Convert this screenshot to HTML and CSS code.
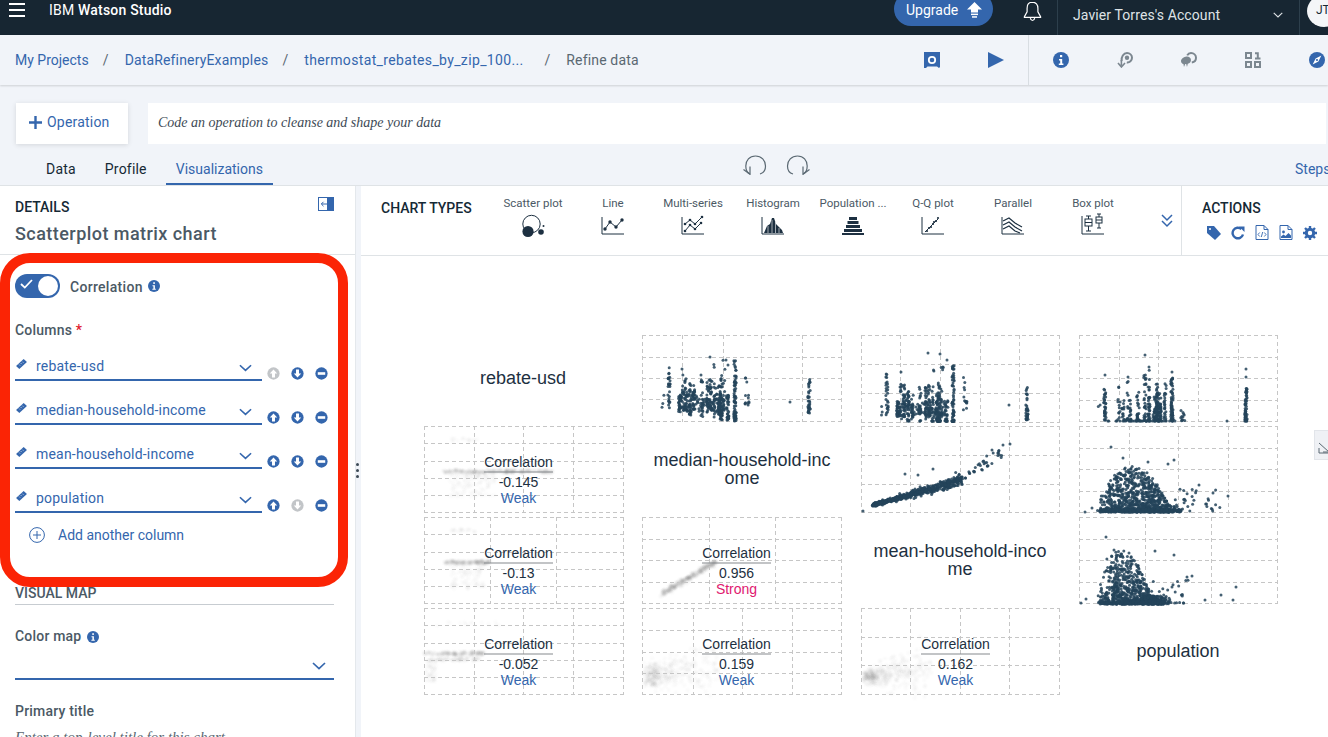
FILE: index.html
```html
<!DOCTYPE html>
<html lang="en">
<head>
<meta charset="UTF-8">
<meta name="viewport" content="width=device-width, initial-scale=1.0">
<title>Refine data - IBM Watson Studio</title>
<link rel="stylesheet" href="styles.css">
</head>
<body>
  <svg class="defs" width="0" height="0">
    <symbol id="i-info" viewBox="0 0 16 16"><circle cx="8" cy="8" r="8" fill="currentColor"/><rect x="7" y="3" width="2.2" height="2.2" fill="#fff"/><path d="M6 7h3.2v4.6H10.4V13H5.8v-1.4h1.4V8.4H6z" fill="#fff"/></symbol>
    <symbol id="i-chev" viewBox="0 0 14 8"><path d="M1 1l6 5.6L13 1" fill="none" stroke="currentColor" stroke-width="1.7"/></symbol>
    <symbol id="i-ruler" viewBox="0 0 12 11"><path d="M0 7.6L8.4 0 12 3.4 3.6 11z" fill="currentColor"/><path d="M3.4 6.2l1 1M5.2 4.6l1 1M7 3l1 1" stroke="#fff" stroke-width=".8"/></symbol>
    <symbol id="i-up" viewBox="0 0 14 14"><circle cx="7" cy="7" r="6.6" fill="currentColor"/><path d="M7 2.6L11 7H8.6v4.4H5.4V7H3z" fill="#fff"/></symbol>
    <symbol id="i-down" viewBox="0 0 14 14"><circle cx="7" cy="7" r="6.6" fill="currentColor"/><path d="M7 11.4L11 7H8.6V2.6H5.4V7H3z" fill="#fff"/></symbol>
    <symbol id="i-minus" viewBox="0 0 14 14"><circle cx="7" cy="7" r="6.6" fill="currentColor"/><rect x="3" y="5.6" width="8" height="2.8" fill="#fff"/></symbol>
  </svg>

  <header class="topbar">
    <div class="burger"><span></span><span></span><span></span></div>
    <div class="brand">IBM <b>Watson Studio</b></div>
    <div class="upgrade">Upgrade
      <svg width="15" height="16" viewBox="0 0 15 16"><path d="M7.5 0L15 7.4H11V10.5H4V7.4H0z" fill="#fff"/><rect x="4" y="11.6" width="7" height="1.5" fill="#fff"/><rect x="5" y="14.2" width="5" height="1.5" fill="#fff"/></svg>
    </div>
    <svg class="bell" width="19" height="21" viewBox="0 0 19 21"><path d="M9.5 1.2c-3.4 0-5.4 2.6-5.4 6v3.6L1.4 15.6v.8h16.2v-.8l-2.700-4.800V7.200c0-3.400-2-6-5.400-6zM7.300 17.200c.3 1.500 1.100 2.300 2.200 2.300s1.900-.8 2.200-2.300" fill="none" stroke="#fff" stroke-width="1.200"/></svg>
    <div class="account">
      <span>Javier Torres's Account</span>
      <svg class="account-chev" width="10" height="6" viewBox="0 0 14 8"><path d="M1 1l6 5.600L13 1" fill="none" stroke="#dfe3e6" stroke-width="1.600"/></svg>
    </div>
    <div class="avatar">JT</div>
  </header>

  <nav class="crumbbar">
    <div class="crumbs">
      <a>My Projects</a><i>/</i>
      <a>DataRefineryExamples</a><i>/</i>
      <a class="crumb-long">thermostat_rebates_by_zip_100...</a><i>/</i>
      <span>Refine data</span>
    </div>
    <div class="crumb-tools">
      <div class="tool"><svg width="16" height="16" viewBox="0 0 16 16"><path d="M0 0h16v15l-1 1-2-1.600H3.500L2 16H0z" fill="#3466ad"/><circle cx="8" cy="8" r="3.200" fill="none" stroke="#fff" stroke-width="1.800"/></svg></div>
      <div class="tool"><svg width="16" height="16" viewBox="0 0 16 16"><path d="M0 0l16 8-16 8z" fill="#3466ad"/></svg></div>
    </div>
    <div class="crumb-tools crumb-tools-more">
      <div class="tool"><svg class="blue" width="16" height="16"><use href="#i-info"/></svg></div>
      <div class="tool"><svg width="16" height="16" viewBox="0 0 16 16"><path d="M4.600 9.200C4 4.800 6.600 1 10 1c2.800 0 5 2.200 5 4.800 0 2.900-2.400 5-5.200 4.600" fill="none" stroke="#7c8790" stroke-width="2"/><circle cx="10" cy="5.800" r="2.200" fill="#7c8790"/><path d="M4.400 8v5.500M1 11l3.400 4L8 11" fill="none" stroke="#7c8790" stroke-width="1.600"/></svg></div>
      <div class="tool"><svg width="16" height="16" viewBox="0 0 16 16"><path d="M6.200 3.400C7 1.900 8.500 1 10 1c2.800 0 5 2.200 5 4.800 0 2.600-1.800 4.400-4.200 4.800" fill="none" stroke="#7c8790" stroke-width="2"/><path d="M5.500 4.500C3 4.800 0 6.800 0 9c0 1.700 1.200 2.800 2.400 3l.6 3 1.200-3h1l.8 3 .8-3.200c1.900-.5 3.200-2 3.200-3.800 0-2.200-2.200-3.700-4.500-3.500z" fill="#7c8790"/></svg></div>
      <div class="tool"><svg width="16" height="16" viewBox="0 0 16 16"><g fill="none" stroke="#7c8790" stroke-width="2"><rect x="1" y="1" width="5" height="5"/><rect x="1" y="10" width="5" height="5"/><rect x="10" y="10" width="5" height="5"/><path d="M10 1.200h2.800V7M10 6.400h5.500"/></g></svg></div>
      <div class="tool"><svg width="16" height="16" viewBox="0 0 16 16"><circle cx="8" cy="8" r="8" fill="#3466ad"/><path d="M12.400 3.600L9.400 9.400 3.600 12.400 6.600 6.600z" fill="#fff"/><circle cx="8" cy="8" r="1.100" fill="#3466ad"/></svg></div>
    </div>
  </nav>

  <section class="opbar">
    <div class="oprow">
      <button class="opbtn"><svg width="13" height="13" viewBox="0 0 13 13"><path d="M5.300 0h2.400v5.300H13v2.400H7.700V13H5.300V7.700H0V5.300h5.300z" fill="#3466ad"/></svg>Operation</button>
      <div class="opinput">Code an operation to cleanse and shape your data</div>
    </div>
    <div class="tabrow">
      <div class="tabs">
        <a class="tab">Data</a>
        <a class="tab">Profile</a>
        <a class="tab tab-on">Visualizations</a>
      </div>
      <div class="undo-redo">
        <svg width="24" height="20" viewBox="0 0 24 20"><path d="M7 19C3.800 17.500 2.800 14 2.800 11 2.800 5.500 6.500 1 12.500 1S22.500 5.500 22.500 11c0 4-2 7-5.500 8" fill="none" stroke="#5a6872" stroke-width="1.200"/><path d="M.5 14.500L7 19.300V11.500" fill="none" stroke="#5a6872" stroke-width="1.200"/></svg>
        <svg width="24" height="20" viewBox="0 0 24 20"><path d="M17 19c3.200-1.500 4.200-5 4.200-8C21.200 5.500 17.500 1 11.500 1S1.500 5.500 1.500 11c0 4 2 7 5.500 8" fill="none" stroke="#5a6872" stroke-width="1.200"/><path d="M23.500 14.500L17 19.300V11.500" fill="none" stroke="#5a6872" stroke-width="1.200"/></svg>
      </div>
      <a class="steps">Steps</a>
    </div>
  </section>

  <div class="workspace">
    <aside class="details">
      <div class="details-head">
        <div class="details-top">
          <h2>DETAILS</h2>
          <svg width="16" height="14" viewBox="0 0 16 14"><rect x=".5" y=".5" width="15" height="13" fill="#fff" stroke="#3466ad"/><rect x="9" y="1" width="6" height="12" fill="#3466ad"/><path d="M9 7H3.500M5.500 4.800L3.300 7l2.200 2.200" fill="none" stroke="#3466ad"/></svg>
        </div>
        <h1>Scatterplot matrix chart</h1>
      </div>

      <div class="toggle-row">
        <div class="toggle">
          <svg width="13" height="10" viewBox="0 0 13 10"><path d="M1 5l3.800 3.600L12 1" fill="none" stroke="#fff" stroke-width="1.800"/></svg>
          <span class="knob"></span>
        </div>
        <label>Correlation</label>
        <svg class="blue" width="12" height="12"><use href="#i-info"/></svg>
      </div>

      <div class="field-label cols-label">Columns <em>*</em></div>

      <div class="col-row">
        <div class="col-select">
          <svg class="blue ruler" width="11" height="10"><use href="#i-ruler"/></svg>
          <span>rebate-usd</span>
          <svg class="blue chev" width="13" height="8"><use href="#i-chev"/></svg>
        </div>
        <div class="col-acts">
          <svg class="off" width="13" height="13"><use href="#i-up"/></svg>
          <svg class="blue" width="13" height="13"><use href="#i-down"/></svg>
          <svg class="blue" width="13" height="13"><use href="#i-minus"/></svg>
        </div>
      </div>
      <div class="col-row">
        <div class="col-select">
          <svg class="blue ruler" width="11" height="10"><use href="#i-ruler"/></svg>
          <span>median-household-income</span>
          <svg class="blue chev" width="13" height="8"><use href="#i-chev"/></svg>
        </div>
        <div class="col-acts">
          <svg class="blue" width="13" height="13"><use href="#i-up"/></svg>
          <svg class="blue" width="13" height="13"><use href="#i-down"/></svg>
          <svg class="blue" width="13" height="13"><use href="#i-minus"/></svg>
        </div>
      </div>
      <div class="col-row">
        <div class="col-select">
          <svg class="blue ruler" width="11" height="10"><use href="#i-ruler"/></svg>
          <span>mean-household-income</span>
          <svg class="blue chev" width="13" height="8"><use href="#i-chev"/></svg>
        </div>
        <div class="col-acts">
          <svg class="blue" width="13" height="13"><use href="#i-up"/></svg>
          <svg class="blue" width="13" height="13"><use href="#i-down"/></svg>
          <svg class="blue" width="13" height="13"><use href="#i-minus"/></svg>
        </div>
      </div>
      <div class="col-row">
        <div class="col-select">
          <svg class="blue ruler" width="11" height="10"><use href="#i-ruler"/></svg>
          <span>population</span>
          <svg class="blue chev" width="13" height="8"><use href="#i-chev"/></svg>
        </div>
        <div class="col-acts">
          <svg class="blue" width="13" height="13"><use href="#i-up"/></svg>
          <svg class="off" width="13" height="13"><use href="#i-down"/></svg>
          <svg class="blue" width="13" height="13"><use href="#i-minus"/></svg>
        </div>
      </div>

      <div class="add-col">
        <svg width="16" height="16" viewBox="0 0 16 16"><circle cx="8" cy="8" r="7.400" fill="none" stroke="#3466ad"/><path d="M8 4v8M4 8h8" stroke="#3466ad"/></svg>
        <span>Add another column</span>
      </div>

      <div class="section-head">VISUAL MAP</div>

      <div class="field-label color-label">Color map <svg class="blue" width="12" height="12"><use href="#i-info"/></svg></div>
      <div class="plain-select"><svg class="blue chev" width="14" height="8"><use href="#i-chev"/></svg></div>

      <div class="field-label title-label">Primary title</div>
      <div class="placeholder">Enter a top-level title for this chart</div>
    </aside>

    <div class="splitter"><span></span><span></span><span></span></div>

    <main class="viz">
      <div class="viz-head">
        <h2 class="chart-title">CHART TYPES</h2>
        <div class="types">
          <div class="type"><span>Scatter plot</span>
            <svg width="24" height="24" viewBox="0 0 24 24"><circle cx="10.500" cy="12" r="8.700" fill="none" stroke="#1d3041" stroke-width="1"/><circle cx="7" cy="19.500" r="5.600" fill="#1d3041"/><circle cx="20" cy="20" r="2.800" fill="#1d3041"/><circle cx="22.500" cy="14" r="1" fill="#1d3041"/></svg></div>
          <div class="type"><span>Line</span>
            <svg width="24" height="24" viewBox="0 0 24 24"><path d="M1 5v17h22" fill="none" stroke="#1d3041" stroke-width="1"/><path d="M4 17l5-7 6 5 6-7" fill="none" stroke="#1d3041" stroke-width="1"/><g fill="#1d3041"><circle cx="4" cy="17" r="1.700"/><circle cx="9" cy="10" r="1.700"/><circle cx="15" cy="15" r="1.700"/><circle cx="21" cy="8" r="1.700"/></g></svg></div>
          <div class="type"><span>Multi-series</span>
            <svg width="24" height="24" viewBox="0 0 24 24"><path d="M1 5v17h22" fill="none" stroke="#1d3041" stroke-width="1"/><g fill="none" stroke="#1d3041" stroke-width="1"><path d="M4 12l5-4 5 4 7-7"/><path d="M4 19l5-6 5 4 6-6"/></g><g fill="#1d3041"><circle cx="4" cy="12" r="1.300"/><circle cx="9" cy="8" r="1.300"/><circle cx="14" cy="12" r="1.300"/><circle cx="21" cy="5" r="1.300"/><circle cx="4" cy="19" r="1.300"/><circle cx="9" cy="13" r="1.300"/><circle cx="14" cy="17" r="1.300"/><circle cx="20" cy="11" r="1.300"/></g></svg></div>
          <div class="type"><span>Histogram</span>
            <svg width="24" height="24" viewBox="0 0 24 24"><path d="M1 5v17h22" fill="none" stroke="#1d3041" stroke-width="1"/><path d="M3 21l3-7 3-2 2-6 2 0 2 6 3 3 3 3 1 3z" fill="#1d3041"/><path d="M7 14v7M11 8v13M14.500 10v11M18 16v5" stroke="#fff" stroke-width=".6"/></svg></div>
          <div class="type"><span>Population ...</span>
            <svg width="24" height="24" viewBox="0 0 24 24"><path d="M8 5h8v3H8zM6.500 9h11v3h-11zM5 13h14v3H5zM3 17h18v3H3zM1 21h22v2H1z" fill="#1d3041"/></svg></div>
          <div class="type"><span>Q-Q plot</span>
            <svg width="24" height="24" viewBox="0 0 24 24"><path d="M1 5v17h22" fill="none" stroke="#1d3041" stroke-width="1"/><path d="M4 20L17 7" stroke="#1d3041" stroke-width="1"/><g fill="#1d3041"><circle cx="6" cy="19" r="1.100"/><circle cx="8" cy="16" r="1.100"/><circle cx="10" cy="15" r="1.100"/><circle cx="12" cy="12" r="1.100"/><circle cx="13" cy="10" r="1.100"/><circle cx="15" cy="9" r="1.100"/><circle cx="17" cy="6" r="1.100"/></g></svg></div>
          <div class="type"><span>Parallel</span>
            <svg width="24" height="24" viewBox="0 0 24 24"><path d="M1 5v17h22" fill="none" stroke="#1d3041" stroke-width="1"/><g fill="none" stroke="#1d3041" stroke-width="1.200"><path d="M2 9l6-3 6 5 7 4"/><path d="M2 13l6-3 6 5 7 4"/><path d="M2 17l6-3 6 5 5 2"/></g></svg></div>
          <div class="type"><span>Box plot</span>
            <svg width="24" height="24" viewBox="0 0 24 24"><path d="M1 4v18h22" fill="none" stroke="#1d3041" stroke-width="1"/><g fill="none" stroke="#1d3041" stroke-width="1"><rect x="4" y="7" width="7" height="7"/><path d="M4 10.500h7M7.500 4v3M7.500 14v5M5 4h5M5 19h5"/><rect x="15" y="5" width="6" height="6"/><path d="M15 8h6M18 2v3M18 11v5M16 2h4M16 16h4"/></g></svg></div>
        </div>
        <svg class="more-types" width="12" height="14" viewBox="0 0 12 14"><path d="M1 1l5 5 5-5M1 7l5 5 5-5" fill="none" stroke="#3466ad" stroke-width="1.500"/></svg>
        <div class="actions">
          <h2 class="chart-title">ACTIONS</h2>
          <div class="action-icons">
            <svg width="14" height="14" viewBox="0 0 14 14"><path d="M0 0h7l7 8-6 6-8-7z" fill="#3466ad"/><circle cx="3" cy="3" r="1" fill="#fff"/></svg>
            <svg width="14" height="14" viewBox="0 0 14 14"><path d="M12 8.500A5.300 5.300 0 1 1 10.400 3" fill="none" stroke="#3466ad" stroke-width="2.400"/><path d="M8 .500h5.500V6z" fill="#3466ad"/></svg>
            <svg width="14" height="15" viewBox="-.5 0 14 15"><path d="M.5.500h8l4 4v10H.5z" fill="none" stroke="#3466ad"/><path d="M8.500.500v4h4" fill="none" stroke="#3466ad"/><path d="M4.200 7.500L2.500 9.500l1.700 2M8.800 7.500l1.700 2-1.700 2M7.200 7l-1.400 5" fill="none" stroke="#3466ad" stroke-width=".9"/></svg>
            <svg width="14" height="15" viewBox="-.5 0 14 15"><path d="M.5.500h8l4 4v10H.5z" fill="none" stroke="#3466ad"/><path d="M8.500.500v4h4" fill="none" stroke="#3466ad"/><circle cx="4" cy="7" r="1.400" fill="#3466ad"/><path d="M1.500 13v-1.500l2.500-2 2 1.500 3-3 2.500 2.500V13z" fill="#3466ad"/></svg>
            <svg width="14" height="14" viewBox="0 0 14 14"><circle cx="7" cy="7" r="3.700" fill="none" stroke="#3466ad" stroke-width="3"/><path d="M7 0v3M7 11v3M0 7h3M11 7h3M2 2l2 2M10 10l2 2M12 2l-2 2M4 10l-2 2" stroke="#3466ad" stroke-width="2.400"/></svg>
          </div>
        </div>
      </div>
      <div class="canvas">
        <svg id="matrix" class="matrix" width="967" height="481" viewBox="361 256 967 481"></svg>
      </div>
    </main>
  </div>

  <div class="side-tab"><svg width="14" height="14" viewBox="0 0 14 14"><path d="M1 3l10 9M11 6v6H5M1 8v5h12" fill="none" stroke="#5a6872"/></svg></div>
  <div class="callout"></div>

  <script src="chart.js"></script>
</body>
</html>
```

FILE: styles.css
```css
* {
  box-sizing: border-box;
}
html, body {
  margin: 0;
  height: 737px;
  overflow: hidden;
}
body {
  position: relative;
  font-family: Roboto, "Noto Sans", sans-serif;
  font-size: 14px;
  color: #152935;
  background-color: #f1f4f9;
}
h1, h2 {
  margin: 0;
}
.defs {
  position: absolute;
}
.blue {
  color: #3466ad;
}
.off {
  color: #c2c5c8;
}

/* top bar */
.topbar {
  display: flex;
  align-items: flex-start;
  height: 35px;
  background-color: #172632;
  color: #fff;
  overflow: hidden;
}
.burger {
  flex: none;
  width: 16px;
  margin: 3px 0 0 9px;
}
.burger span {
  display: block;
  height: 2px;
  margin-bottom: 4px;
  background-color: #fff;
}
.brand {
  flex: none;
  margin: 2px 0 0 24px;
  font-size: 14px;
  line-height: 17px;
  letter-spacing: .2px;
  width: 845px;
}
.brand b {
  font-weight: 500;
}
.upgrade {
  flex: none;
  display: flex;
  align-items: center;
  gap: 9px;
  width: 99px;
  height: 34px;
  margin-top: -8px;
  padding: 2px 0 0 12px;
  border-radius: 17px;
  background-color: #3466ad;
  font-size: 14px;
}
.bell {
  flex: none;
  margin: 1px 0 0 30px;
}
.account {
  flex: none;
  display: flex;
  align-items: center;
  width: 243px;
  height: 35px;
  margin-left: 15px;
  padding: 0 16px 6px 15px;
  border-left: 1px solid #2d3f4c;
  border-right: 1px solid #2d3f4c;
  font-size: 14px;
  letter-spacing: .1px;
  color: #dfe3e6;
}
.account-chev {
  margin-left: auto;
}
.avatar {
  flex: none;
  width: 34px;
  height: 32px;
  margin: -5px 0 0 7px;
  padding: 8px 0 0 9px;
  border-radius: 50%;
  background-color: #f4f6f8;
  color: #152935;
  font-size: 12px;
}

/* breadcrumbs */
.crumbbar {
  display: flex;
  align-items: stretch;
  height: 50px;
  background-color: #f1f4f9;
  box-shadow: 0 1px 2px rgba(0,0,0,0.15);
  position: relative;
}
.crumbs {
  flex: none;
  display: flex;
  align-items: center;
  width: 900px;
  padding-left: 15px;
  white-space: nowrap;
}
.crumbs a {
  color: #3466ad;
}
.crumbs i {
  width: 36px;
  padding-right: 2px;
  text-align: center;
  font-style: normal;
  color: #5a6872;
}
.crumbs .crumb-long {
  width: 226px;
  letter-spacing: .35px;
}
.crumbs span {
  color: #5a6872;
  letter-spacing: .15px;
}
.crumbs a:nth-of-type(2) {
  letter-spacing: .15px;
}
.crumb-tools {
  display: flex;
  flex: none;
}
.crumb-tools-more {
  border-left: 1px solid #d8dde2;
}
.tool {
  display: flex;
  align-items: center;
  justify-content: center;
  width: 64px;
  height: 50px;
}
.tool svg {
  display: block;
}

/* operation bar */
.opbar {
  height: 100px;
  padding-top: 18px;
}
.oprow {
  display: flex;
  gap: 20px;
  height: 41px;
  padding: 0 2px 0 16px;
}
.opbtn {
  flex: none;
  display: flex;
  align-items: center;
  gap: 5px;
  width: 112px;
  height: 41px;
  padding: 0 0 3px 13px;
  border: none;
  background-color: #fff;
  box-shadow: 0 1px 5px rgba(0,0,0,0.12);
  color: #3466ad;
  font-family: inherit;
  font-size: 14px;
  letter-spacing: .2px;
}
.opinput {
  flex: 1;
  padding: 12px 0 0 10px;
  background-color: #fff;
  font-family: "Liberation Serif", serif;
  font-style: italic;
  font-size: 14px;
  color: #3d4a55;
}
.tabrow {
  display: flex;
  align-items: stretch;
  height: 41px;
}
.tabs {
  flex: none;
  display: flex;
  gap: 9px;
  margin-left: 36px;
  width: 707px;
}
.tab {
  height: 26px;
  margin-top: 15px;
  padding: 1px 10px 0;
  line-height: 18px;
  letter-spacing: .2px;
}
.tab-on {
  color: #3466ad;
  border-bottom: 2px solid #3466ad;
  letter-spacing: 0;
}
.undo-redo {
  flex: none;
  display: flex;
  gap: 19px;
  padding-top: 11px;
}
.undo-redo svg {
  display: block;
}
.steps {
  flex: none;
  margin: 16px 0 0 485px;
  line-height: 18px;
  color: #3466ad;
}

/* main area */
.workspace {
  display: flex;
  height: 552px;
  border-top: 1px solid #dfe3e6;
}
.details {
  flex: none;
  width: 355px;
  background-color: #fff;
  overflow: hidden;
}
.details-head {
  height: 69px;
  padding: 13px 21px 0 15px;
  border-bottom: 1px solid #dfe3e6;
}
.details-top {
  display: flex;
  justify-content: space-between;
  height: 20px;
}
.details-top h2 {
  font-size: 14px;
  font-weight: 500;
  line-height: 16px;
}
.details-top svg {
  margin-top: -2px;
}
.details-head h1 {
  margin-top: 3px;
  font-size: 18px;
  line-height: 24px;
  font-weight: 500;
  letter-spacing: .45px;
  color: #4b5965;
}
.toggle-row {
  display: flex;
  align-items: center;
  height: 24px;
  margin: 19px 0 0 15px;
}
.toggle {
  position: relative;
  width: 45px;
  height: 24px;
  border-radius: 12px;
  background-color: #3466ad;
}
.toggle svg {
  position: absolute;
  left: 5px;
  top: 5px;
}
.knob {
  position: absolute;
  right: 2px;
  top: 2px;
  width: 20px;
  height: 20px;
  border-radius: 50%;
  background-color: #fff;
}
.toggle-row label {
  margin: 1px 5px 0 10px;
  font-size: 14px;
  font-weight: 500;
  letter-spacing: .3px;
  color: #4b5965;
}
.field-label {
  margin-left: 15px;
  font-size: 14px;
  font-weight: 500;
  line-height: 18px;
  letter-spacing: .2px;
  color: #4b5965;
}
.field-label em {
  font-style: normal;
  color: #e0182d;
}
.field-label svg {
  margin-left: 2px;
  vertical-align: -2px;
}
.cols-label {
  height: 16px;
  margin-top: 23px;
}
.col-row {
  display: flex;
  align-items: flex-end;
  height: 44px;
  margin-left: 15px;
}
.col-select {
  position: relative;
  display: flex;
  align-items: center;
  width: 247px;
  height: 28px;
  padding: 0 10px 0 21px;
  border-bottom: 2px solid #3466ad;
  color: #3466ad;
  letter-spacing: .2px;
}
.ruler {
  position: absolute;
  left: 1px;
  top: 6px;
}
.chev {
  margin: 4px 0 0 auto;
}
.col-acts {
  display: flex;
  gap: 11px;
  margin: 0 0 1px 5px;
}
.add-col {
  display: flex;
  align-items: center;
  gap: 13px;
  height: 18px;
  margin: 13px 0 0 29px;
  color: #3466ad;
}
.section-head {
  height: 20px;
  margin: 41px 21px 0 15px;
  font-size: 14px;
  font-weight: 500;
  line-height: 16px;
  color: #4b5965;
  border-bottom: 1px solid #c7ccd1;
}
.color-label {
  margin-top: 22px;
}
.plain-select {
  display: flex;
  align-items: center;
  height: 35px;
  margin: 0 21px 0 15px;
  padding: 8px 8px 0 0;
  border-bottom: 2px solid #3466ad;
}
.plain-select .chev {
  margin-top: 0;
}
.title-label {
  margin-top: 22px;
}
.placeholder {
  margin: 9px 0 0 15px;
  font-family: "Liberation Serif", serif;
  font-style: italic;
  font-size: 15px;
  color: #5a6872;
}
.splitter {
  flex: none;
  width: 6px;
  padding-top: 277px;
  background-color: #f1f4f9;
  border-left: 1px solid #e4e8ec;
}
.splitter span {
  display: block;
  width: 3px;
  height: 3px;
  margin: 0 0 3px 0;
  border-radius: 50%;
  background-color: #3d4a55;
}
.viz {
  flex: 1;
  min-width: 0;
  background-color: #fff;
}
.viz-head {
  display: flex;
  height: 70px;
  border-bottom: 1px solid #dfe3e6;
}
.chart-title {
  font-size: 14px;
  font-weight: 500;
  line-height: 16px;
  white-space: nowrap;
}
.viz-head > .chart-title {
  flex: none;
  width: 132px;
  padding: 14px 0 0 20px;
}
.types {
  flex: none;
  display: flex;
  width: 640px;
}
.type {
  display: flex;
  flex-direction: column;
  align-items: center;
  width: 80px;
  padding-top: 10px;
  font-size: 11.5px;
  line-height: 15px;
  color: #4b5965;
  white-space: nowrap;
}
.type svg {
  margin-top: 1px;
  overflow: visible;
}
.more-types {
  flex: none;
  margin: 28px 0 0 28px;
}
.actions {
  flex: none;
  width: 147px;
  margin-left: 8px;
  padding: 14px 0 0 20px;
  border-left: 1px solid #dfe3e6;
}
.action-icons {
  display: flex;
  align-items: center;
  gap: 10px;
  margin: 9px 0 0 5px;
}

/* matrix chart */
.matrix {
  display: block;
}
.matrix text {
  font-family: "Liberation Sans", Arial, sans-serif;
  font-size: 14px;
  text-anchor: middle;
  fill: #1d3041;
}
.matrix .m-label {
  font-size: 18px;
}
.matrix .m-weak {
  fill: #3466ad;
}
.matrix .m-strong {
  fill: #e0186f;
}
.matrix .m-smudge {
  fill: #666;
  filter: blur(1px);
}
.side-tab {
  position: absolute;
  left: 1314px;
  top: 430px;
  width: 20px;
  height: 30px;
  padding: 9px 0 0 3px;
  background-color: #eff1f5;
  border: 1px solid #e2e5ea;
}
.side-tab svg {
  display: block;
}
.callout {
  position: absolute;
  left: 0;
  top: 253px;
  width: 348px;
  height: 334px;
  border: 10px solid #fb2405;
  border-radius: 30px;
  pointer-events: none;
}
```

FILE: chart.js
```js
// scatterplot matrix, drawn once with a fixed seed
var NS = 'http://www.w3.org/2000/svg';
var svg = document.getElementById('matrix');
var seed = 4711;

function rnd() {
  seed = (seed * 16807) % 2147483647;
  return (seed - 1) / 2147483646;
}

function add(name, attrs, text) {
  var el = document.createElementNS(NS, name);
  for (var k in attrs) el.setAttribute(k, attrs[k]);
  if (text) el.textContent = text;
  svg.appendChild(el);
  return el;
}

function grid(xs, ys) {
  var d = '';
  xs.forEach(function (x) {
    d += 'M' + (x + 0.5) + ' ' + ys[0] + 'V' + (ys[ys.length - 1] + 1);
  });
  ys.forEach(function (y) {
    d += 'M' + xs[0] + ' ' + (y + 0.5) + 'H' + (xs[xs.length - 1] + 1);
  });
  add('path', { d: d, fill: 'none', stroke: '#c6c6c6', 'stroke-dasharray': '4 3' });
}

function dot(x, y) {
  add('circle', { cx: x.toFixed(1), cy: y.toFixed(1), r: 1.5, fill: '#24445a', opacity: 0.85 });
}

function smudge(x, y, alpha) {
  add('circle', { cx: x.toFixed(1), cy: y.toFixed(1), r: 1.8, class: 'm-smudge', opacity: alpha });
}

function columns(list, dx, dy) {
  list.forEach(function (c) {
    for (var i = 0; i < c[3]; i++) {
      var y = c[2] - (c[2] - c[1]) * Math.pow(rnd(), 1.5) + dy;
      dot(c[0] + dx + (rnd() - 0.5) * 2.4, Math.min(y, 421));
    }
  });
}

function gauss() {
  return (rnd() + rnd() + rnd() + rnd() - 2) / 2;
}

var incomeCols = [
  [669, 365, 408, 26], [663, 395, 408, 3], [680, 395, 410, 24], [683, 375, 412, 14],
  [686, 378, 410, 28], [690, 380, 415, 28], [694, 385, 412, 22], [702, 375, 417, 20],
  [708, 380, 412, 24], [711, 378, 410, 28], [715, 360, 418, 18], [719, 385, 415, 34],
  [721, 375, 420, 46], [724, 358, 410, 12], [728, 395, 420, 24], [735, 358, 421, 70],
  [746, 370, 405, 7], [748, 393, 405, 6], [809, 379, 413, 34]
];

// rebate-usd against the two income columns
grid([642, 682, 723, 761, 802, 841], [335, 357, 378, 399, 421]);
columns(incomeCols, 0, 0);
for (var i = 0; i < 110; i++) dot(678 + rnd() * 52, 394 + rnd() * 18);
[[790, 402], [710, 357], [682, 369], [726, 360], [728, 365]].forEach(function (p) { dot(p[0], p[1]); });

grid([861, 900, 940, 980, 1019, 1059], [335, 364, 393, 422]);
columns(incomeCols, 218, 7);
for (i = 0; i < 110; i++) dot(896 + rnd() * 52, 400 + rnd() * 16);
[[1009, 405], [928, 353], [940, 354], [947, 360], [901, 372]].forEach(function (p) { dot(p[0], p[1]); });

// rebate-usd against population
grid([1079, 1119, 1158, 1198, 1238, 1277], [335, 357, 378, 400, 421]);
columns([
  [1105, 388, 421, 34], [1099, 400, 415, 2], [1119, 385, 421, 12], [1123, 395, 421, 14],
  [1127, 378, 421, 12], [1130, 395, 421, 16], [1138, 392, 421, 26], [1145, 375, 421, 28],
  [1149, 368, 421, 36], [1154, 395, 421, 20], [1157, 384, 421, 60], [1160, 392, 421, 40],
  [1165, 383, 421, 24], [1172, 378, 421, 70], [1182, 408, 421, 8], [1184, 412, 421, 4],
  [1246, 388, 421, 60]
], 0, 0);
[[1145, 355], [1149, 367], [1172, 372], [1246, 369], [1246, 377], [1105, 375], [1128, 377], [1227, 421]].forEach(function (p) { dot(p[0], p[1]); });
for (i = 0; i < 40; i++) dot(1105 + rnd() * 70, 421);

// median against mean income
grid([861, 910, 960, 1009, 1059], [426, 455, 484, 512]);
dot(863, 511);
for (i = 0; i < 560; i++) {
  var t = Math.pow(rnd(), 1.2) * 0.68;
  dot(872 + t * 130 + rnd() * 2, 505 - t * 36 + gauss() * (3 + t * 9));
}
for (i = 0; i < 42; i++) {
  t = rnd();
  dot(955 + t * 50, 480 - t * 28 + gauss() * 10);
}
[[1003, 445], [1010, 444], [992, 450], [933, 469], [918, 475], [905, 474]].forEach(function (p) { dot(p[0], p[1]); });

// population clouds
grid([1079, 1129, 1178, 1228, 1277], [426, 448, 469, 491, 512]);
grid([1079, 1145, 1211, 1277], [517, 539, 560, 582, 603]);

function cloud(x0, width, peak, bottom, height, count) {
  for (var n = 0; n < count; n++) {
    var u = rnd() * 0.7 + rnd() * 0.3;
    var off = Math.abs(u - peak) * 1.5;
    var h = height * Math.max(0.15, 1 - off * off * 2);
    dot(x0 + u * width, bottom - h * Math.pow(rnd(), 2));
  }
  for (n = 0; n < count / 6; n++) dot(x0 + rnd() * width, bottom - rnd() * 3);
}
cloud(1097, 84, 0.42, 512, 46, 840);
for (i = 0; i < 30; i++) dot(1170 + rnd() * 50, 511 - Math.pow(rnd(), 2) * 22);
[[1111, 447], [1123, 458], [1148, 462], [1168, 464], [1174, 460], [1101, 512], [1085, 512], [1092, 508], [1228, 496], [1213, 493], [1199, 485]].forEach(function (p) { dot(p[0], p[1]); });

cloud(1097, 72, 0.32, 604, 54, 780);
for (i = 0; i < 36; i++) dot(1150 + rnd() * 40, 603 - Math.pow(rnd(), 2) * 25);
[[1106, 537], [1114, 550], [1129, 553], [1155, 551], [1174, 555], [1086, 599], [1081, 603], [1236, 587], [1221, 595], [1233, 600], [1205, 600], [1187, 577], [1192, 576]].forEach(function (p) { dot(p[0], p[1]); });

// correlation cells
function correlation(left, top, xs, ys, value, strength) {
  grid(xs, ys);
  var cx = left + 94.5;
  add('text', { x: cx, y: top + 41 }, 'Correlation');
  add('path', { d: 'M' + (cx - 34.5) + ' ' + (top + 46) + 'H' + (cx + 34.5), stroke: '#85898d', 'stroke-width': 1.2 });
  add('text', { x: cx, y: top + 61 }, value);
  add('text', { x: cx, y: top + 77, class: strength === 'Strong' ? 'm-strong' : 'm-weak' }, strength);
}

function faint(x0, x1, y, h, count, alpha) {
  for (var n = 0; n < count; n++) smudge(x0 + rnd() * (x1 - x0), y + rnd() * h, alpha);
}

faint(443, 553, 470, 3, 140, 0.1);
faint(450, 495, 473, 24, 110, 0.035);
faint(450, 480, 438, 4, 14, 0.04);
correlation(424, 426, [424, 474, 523, 573, 623], [426, 443, 461, 478, 495, 512], '-0.145', 'Weak');

faint(445, 490, 561, 3, 70, 0.12);
faint(450, 485, 565, 24, 80, 0.035);
faint(448, 475, 529, 3, 14, 0.05);
correlation(424, 517, [424, 490, 556, 623], [517, 534, 552, 569, 586, 603], '-0.13', 'Weak');

faint(424, 485, 652, 3, 90, 0.09);
faint(424, 480, 658, 3, 50, 0.07);
faint(426, 436, 660, 22, 50, 0.03);
faint(424, 500, 622, 4, 14, 0.03);
correlation(424, 608, [424, 474, 523, 573, 623], [608, 625, 643, 660, 677, 694], '-0.052', 'Weak');

for (i = 0; i < 220; i++) {
  t = rnd();
  smudge(662 + t * 54 + gauss() * 3, 594 - t * 32 + gauss() * 5, 0.08);
}
correlation(642, 517, [642, 709, 775, 841], [517, 539, 560, 582, 603], '0.956', 'Strong');

for (i = 0; i < 420; i++) {
  t = Math.pow(rnd(), 2.4);
  smudge(644 + rnd() * 12 + t * 72, 676 - t * 12 + gauss() * (20 + t * 30), 0.035);
}
correlation(642, 608, [642, 693, 742, 792, 841], [608, 630, 652, 673, 694], '0.159', 'Weak');

for (i = 0; i < 420; i++) {
  t = Math.pow(rnd(), 2.4);
  smudge(863 + rnd() * 10 + t * 60, 677 - t * 8 + gauss() * (10 + t * 40), 0.04);
}
correlation(861, 608, [861, 910, 960, 1009, 1059], [608, 637, 665, 694], '0.162', 'Weak');

// diagonal labels
add('text', { x: 523, y: 384, class: 'm-label' }, 'rebate-usd');
add('text', { x: 742, y: 466, class: 'm-label' }, 'median-household-inc');
add('text', { x: 742, y: 484, class: 'm-label' }, 'ome');
add('text', { x: 960, y: 557, class: 'm-label' }, 'mean-household-inco');
add('text', { x: 960, y: 575, class: 'm-label' }, 'me');
add('text', { x: 1178, y: 657, class: 'm-label' }, 'population');
```
